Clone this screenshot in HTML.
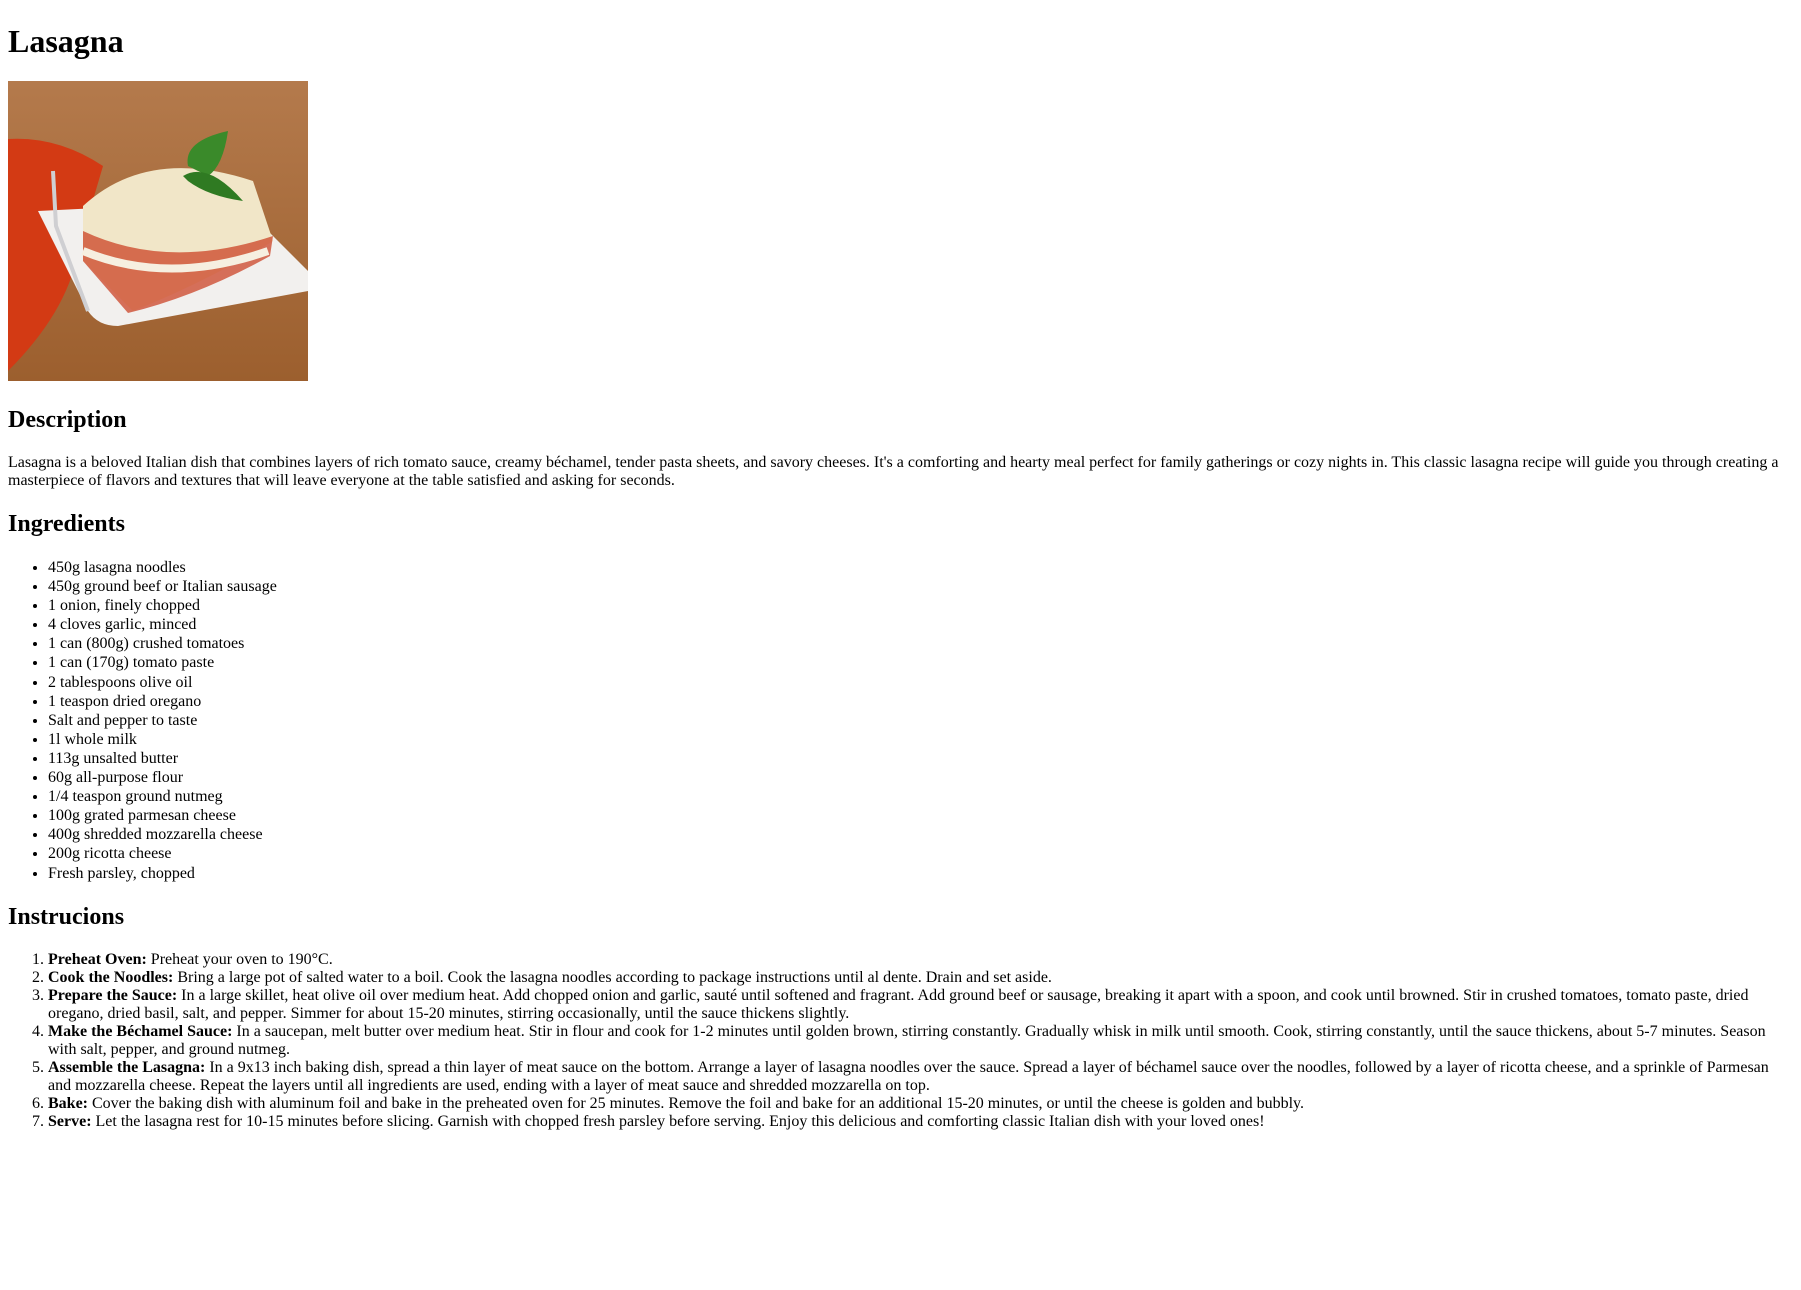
<!DOCTYPE html>
<html><head><meta charset="utf-8"><style>
body{margin:8px;font-family:"Liberation Serif",serif;font-size:16px;color:#000;background:#fff}
h1{margin:23px 0 21px}
h2{margin:21px 0 20px}
ul li{line-height:19.1px}
ul{margin-bottom:14px}
.img{width:300px;height:300px;position:relative;overflow:hidden;background:#a86a3a;margin-bottom:26px}
</style></head><body>
<h1>Lasagna</h1>
<div class="img">
<svg width="300" height="300" viewBox="0 0 300 300">
<defs><linearGradient id="bg" x1="0" y1="0" x2="0" y2="1"><stop offset="0" stop-color="#b47a4c"/><stop offset="1" stop-color="#9c5f2e"/></linearGradient></defs>
<rect width="300" height="300" fill="url(#bg)"/>
<path d="M0 58 Q50 55 95 85 L70 170 Q60 230 0 290 Z" fill="#d33a14"/>
<path d="M30 130 L230 120 L300 190 L300 210 L110 245 Q90 245 80 230 Z" fill="#f2f0ee"/>
<path d="M75 125 Q140 65 245 100 L265 160 Q200 200 125 230 L75 180 Z" fill="#f1e6c8"/>
<path d="M75 150 Q160 190 265 155 L262 175 Q190 215 120 232 L75 180Z" fill="#c9381a" opacity="0.7"/>
<path d="M75 170 Q160 205 260 170" stroke="#f6efe0" stroke-width="8" fill="none"/>
<path d="M180 85 Q175 60 220 50 Q215 85 200 95Z" fill="#3a8a2a"/>
<path d="M175 95 Q200 80 235 120 Q200 115 180 100Z" fill="#2f7a22"/>
<path d="M45 90 L48 145 L80 230" stroke="#cfcfd2" stroke-width="4" fill="none"/>
</svg>
</div>
<h2>Description</h2>
<p>Lasagna is a beloved Italian dish that combines layers of rich tomato sauce, creamy béchamel, tender pasta sheets, and savory cheeses. It's a comforting and hearty meal perfect for family gatherings or cozy nights in. This classic lasagna recipe will guide you through creating a masterpiece of flavors and textures that will leave everyone at the table satisfied and asking for seconds.</p>
<h2>Ingredients</h2>
<ul>
<li>450g lasagna noodles</li>
<li>450g ground beef or Italian sausage</li>
<li>1 onion, finely chopped</li>
<li>4 cloves garlic, minced</li>
<li>1 can (800g) crushed tomatoes</li>
<li>1 can (170g) tomato paste</li>
<li>2 tablespoons olive oil</li>
<li>1 teaspon dried oregano</li>
<li>Salt and pepper to taste</li>
<li>1l whole milk</li>
<li>113g unsalted butter</li>
<li>60g all-purpose flour</li>
<li>1/4 teaspon ground nutmeg</li>
<li>100g grated parmesan cheese</li>
<li>400g shredded mozzarella cheese</li>
<li>200g ricotta cheese</li>
<li>Fresh parsley, chopped</li>
</ul>
<h2>Instrucions</h2>
<ol>
<li><b>Preheat Oven:</b> Preheat your oven to 190°C.</li>
<li><b>Cook the Noodles:</b> Bring a large pot of salted water to a boil. Cook the lasagna noodles according to package instructions until al dente. Drain and set aside.</li>
<li><b>Prepare the Sauce:</b> In a large skillet, heat olive oil over medium heat. Add chopped onion and garlic, sauté until softened and fragrant. Add ground beef or sausage, breaking it apart with a spoon, and cook until browned. Stir in crushed tomatoes, tomato paste, dried oregano, dried basil, salt, and pepper. Simmer for about 15-20 minutes, stirring occasionally, until the sauce thickens slightly.</li>
<li><b>Make the Béchamel Sauce:</b> In a saucepan, melt butter over medium heat. Stir in flour and cook for 1-2 minutes until golden brown, stirring constantly. Gradually whisk in milk until smooth. Cook, stirring constantly, until the sauce thickens, about 5-7 minutes. Season with salt, pepper, and ground nutmeg.</li>
<li><b>Assemble the Lasagna:</b> In a 9x13 inch baking dish, spread a thin layer of meat sauce on the bottom. Arrange a layer of lasagna noodles over the sauce. Spread a layer of béchamel sauce over the noodles, followed by a layer of ricotta cheese, and a sprinkle of Parmesan and mozzarella cheese. Repeat the layers until all ingredients are used, ending with a layer of meat sauce and shredded mozzarella on top.</li>
<li><b>Bake:</b> Cover the baking dish with aluminum foil and bake in the preheated oven for 25 minutes. Remove the foil and bake for an additional 15-20 minutes, or until the cheese is golden and bubbly.</li>
<li><b>Serve:</b> Let the lasagna rest for 10-15 minutes before slicing. Garnish with chopped fresh parsley before serving. Enjoy this delicious and comforting classic Italian dish with your loved ones!</li>
</ol>
</body></html>
